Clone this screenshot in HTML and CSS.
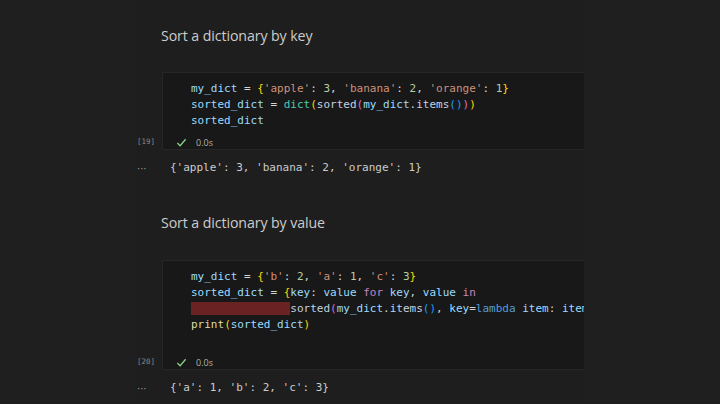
FILE: index.html
```html
<!DOCTYPE html>
<html>
<head>
<meta charset="utf-8">
<link rel="stylesheet" href="styles.css">
</head>
<body>
<div class="page">
  <main class="nb">
    <h2 class="md">Sort a dictionary by key</h2>
    <section class="cell">
      <div class="gutter"><span class="count">[19]</span></div>
      <div class="box">
        <pre class="code"><span class="v">my_dict</span> <span class="o">=</span> <span class="b1">{</span><span class="s">'apple'</span><span class="o">:</span> <span class="n">3</span><span class="o">,</span> <span class="s">'banana'</span><span class="o">:</span> <span class="n">2</span><span class="o">,</span> <span class="s">'orange'</span><span class="o">:</span> <span class="n">1</span><span class="b1">}</span>
<span class="v">sorted_dict</span> <span class="o">=</span> <span class="c">dict</span><span class="b1">(</span><span class="f">sorted</span><span class="b2">(</span><span class="v">my_dict</span><span class="o">.</span><span class="f">items</span><span class="b3">()</span><span class="b2">)</span><span class="b1">)</span>
<span class="v">sorted_dict</span></pre>
        <div class="status"><svg class="check" viewBox="0 0 12 12" width="11" height="11"><path d="M1.5 6.5 L4.5 9.5 L10.5 2.5" fill="none" stroke="#89d185" stroke-width="1.4"/></svg><span class="time">0.0s</span></div>
      </div>
    </section>
    <div class="out">
      <span class="dots">···</span>
      <pre class="result">{'apple': 3, 'banana': 2, 'orange': 1}</pre>
    </div>

    <h2 class="md md2">Sort a dictionary by value</h2>
    <section class="cell">
      <div class="gutter"><span class="count">[20]</span></div>
      <div class="box">
        <pre class="code"><span class="v">my_dict</span> <span class="o">=</span> <span class="b1">{</span><span class="s">'b'</span><span class="o">:</span> <span class="n">2</span><span class="o">,</span> <span class="s">'a'</span><span class="o">:</span> <span class="n">1</span><span class="o">,</span> <span class="s">'c'</span><span class="o">:</span> <span class="n">3</span><span class="b1">}</span>
<span class="v">sorted_dict</span> <span class="o">=</span> <span class="b1">{</span><span class="v">key</span><span class="o">:</span> <span class="v">value</span> <span class="k">for</span> <span class="v">key</span><span class="o">,</span> <span class="v">value</span> <span class="k">in</span>
<span class="err">               </span><span class="f">sorted</span><span class="b2">(</span><span class="v">my_dict</span><span class="o">.</span><span class="f">items</span><span class="b3">()</span><span class="o">,</span> <span class="v">key</span><span class="o">=</span><span class="l">lambda</span> <span class="v">item</span><span class="o">:</span> <span class="v">item</span><span class="b3">[</span><span class="n">1</span><span class="b3">]</span><span class="b2">)</span><span class="b1">}</span>
<span class="p">print</span><span class="b1">(</span><span class="v">sorted_dict</span><span class="b1">)</span>
<span class="blank"> </span></pre>
        <div class="status"><svg class="check" viewBox="0 0 12 12" width="11" height="11"><path d="M1.5 6.5 L4.5 9.5 L10.5 2.5" fill="none" stroke="#89d185" stroke-width="1.4"/></svg><span class="time">0.0s</span></div>
      </div>
    </section>
    <div class="out">
      <span class="dots">···</span>
      <pre class="result">{'a': 1, 'b': 2, 'c': 3}</pre>
    </div>
  </main>
</div>
</body>
</html>
```
FILE: styles.css
```css
* { box-sizing: border-box; }
html, body {
  margin: 0;
  padding: 0;
  background: #1f1f1f;
  width: 720px;
  height: 404px;
  overflow: hidden;
}
.page {
  display: flex;
  height: 404px;
}
.nb {
  margin-left: 137px;
  width: 447px;
  padding-top: 26px;
  overflow: hidden;
  background: #1e1e1e;
  display: flex;
  flex-direction: column;
}
.md {
  margin: 0 0 26px 24px;
  font-family: "Open Sans", "Noto Sans", sans-serif;
  font-weight: 400;
  font-size: 14.2px;
  line-height: 20px;
  height: 20px;
  color: #cccccc;
  letter-spacing: -0.1px;
}
.md2 {
  margin-top: 37px;
  margin-bottom: 27px;
}
.cell {
  display: grid;
  grid-template-columns: 25px 1fr;
}
.gutter {
  display: flex;
  align-items: flex-end;
  padding-bottom: 2px;
}
.count {
  font-family: "DejaVu Sans Mono", monospace;
  font-size: 7.5px;
  color: #8a8a8a;
  line-height: 12px;
}
.box {
  background: #181818;
  border: 1px solid #262626;
  border-right: none;
  padding-top: 8px;
  overflow: hidden;
}
.code {
  margin: 0;
  padding-left: 28px;
  font-family: "DejaVu Sans Mono", monospace;
  font-size: 11px;
  line-height: 16px;
  color: #d4d4d4;
  white-space: pre;
}
.code .v { color: #9cdcfe; }
.code .o { color: #d4d4d4; }
.code .s { color: #ce9178; }
.code .n { color: #b5cea8; }
.code .c { color: #4ec9b0; }
.code .f { color: #c4d3e0; }
.code .p { color: #dcdcaa; }
.code .k { color: #c586c0; }
.code .l { color: #569cd6; }
.code .b1 { color: #ffd700; }
.code .b2 { color: #da70d6; }
.code .b3 { color: #179fff; }
.code .err { background: #6a2222; }
.status {
  display: flex;
  align-items: center;
  height: 14px;
  margin-top: 6px;
  padding-left: 13px;
}
.check { margin-right: 9px; }
.time {
  font-family: "Open Sans", sans-serif;
  font-size: 9px;
  color: #b0b0b0;
}
.out {
  display: flex;
  align-items: center;
  height: 16px;
  margin-top: 10px;
}
.dots {
  width: 33px;
  font-family: "DejaVu Sans", sans-serif;
  font-size: 10px;
  color: #9a9a9a;
}
.result {
  margin: 0;
  font-family: "DejaVu Sans Mono", monospace;
  font-size: 11px;
  line-height: 16px;
  color: #cccccc;
}
```
